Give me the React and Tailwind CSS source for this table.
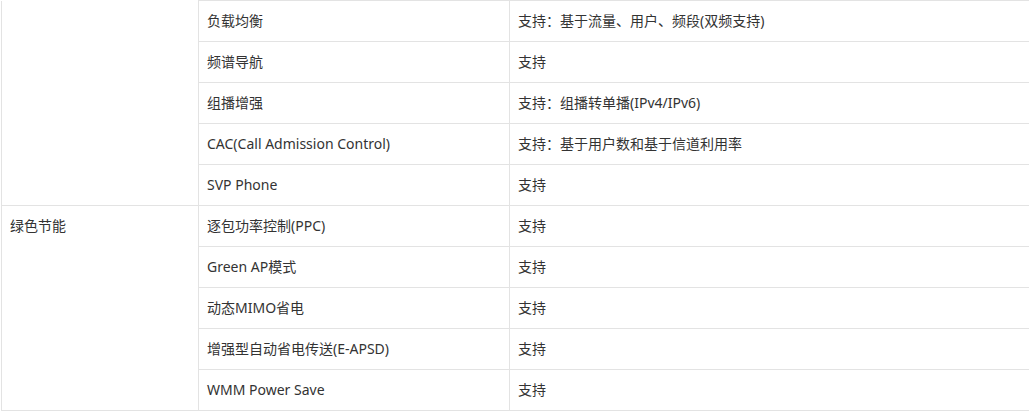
import React from "react";

// Feature rows for the visible part of the spec table
const upperRows = [
  ["负载均衡", "支持：基于流量、用户、频段(双频支持)"],
  ["频谱导航", "支持"],
  ["组播增强", "支持：组播转单播(IPv4/IPv6)"],
  ["CAC(Call Admission Control)", "支持：基于用户数和基于信道利用率"],
  ["SVP Phone", "支持"],
];

const greenRows = [
  ["逐包功率控制(PPC)", "支持"],
  ["Green AP模式", "支持"],
  ["动态MIMO省电", "支持"],
  ["增强型自动省电传送(E-APSD)", "支持"],
  ["WMM Power Save", "支持"],
];

const cell = "h-[41px] border border-[#e3e3e3] px-2 pb-[2px] align-middle";

export default function App() {
  return (
    <div
      className="w-full overflow-hidden bg-white pl-px text-[14px] text-[#333]"
      style={{ fontFamily: '"Noto Sans", "Noto Sans CJK SC", sans-serif' }}
    >
      <table className="w-[1060px] table-fixed border-collapse">
        <colgroup>
          <col className="w-[197px]" />
          <col className="w-[311px]" />
          <col />
        </colgroup>
        <tbody>
          {upperRows.map(([name, value], i) => (
            <tr key={name}>
              {i === 0 && <td rowSpan={5} className={`${cell} border-t-0`}></td>}
              <td className={cell}>{name}</td>
              <td className={cell}>{value}</td>
            </tr>
          ))}
          {greenRows.map(([name, value], i) => (
            <tr key={name}>
              {i === 0 && (
                <td rowSpan={5} className={`${cell} align-top pt-[9px]`}>
                  绿色节能
                </td>
              )}
              <td className={cell}>{name}</td>
              <td className={cell}>{value}</td>
            </tr>
          ))}
        </tbody>
      </table>
    </div>
  );
}
